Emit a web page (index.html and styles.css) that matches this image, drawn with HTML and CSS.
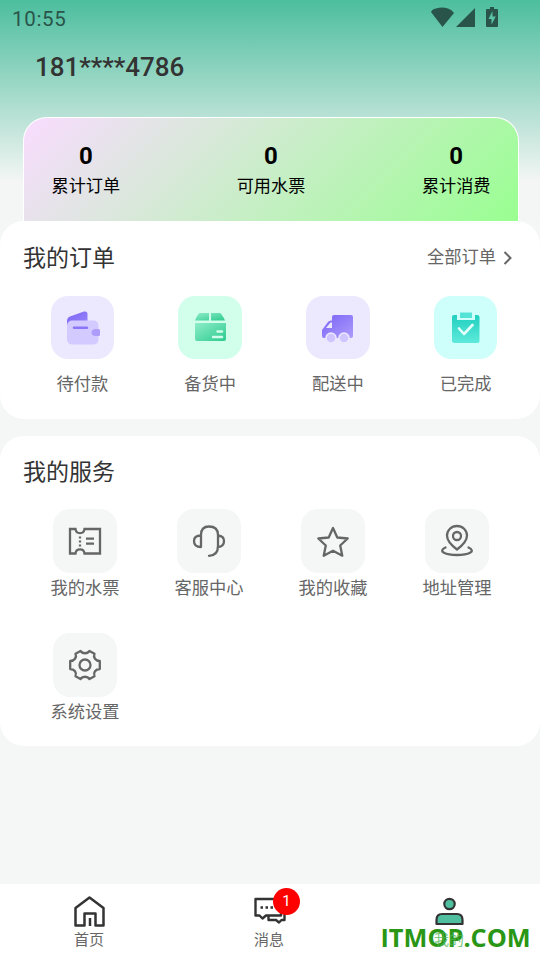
FILE: index.html
```html
<!DOCTYPE html>
<html lang="zh-CN">
<head>
<meta charset="utf-8">
<title>我的</title>
<link rel="stylesheet" href="styles.css">
</head>
<body>
<div class="app">
  <header class="header">
    <div class="status">
      <span class="clock">10:55</span>
      <svg class="status-icons" width="70" height="28" viewBox="0 0 70 28" fill="#29544a">
        <path d="M1 12Q2 9 6 8.500Q12 6.500 18 8.500Q22 9.500 24 13L12.500 27Z"/>
        <path d="M26 27H45V8Z"/>
        <path fill-rule="evenodd" d="M60 7H64V9H67Q68 9 68 10V26Q68 27 67 27H57Q56 27 56 26V10Q56 9 57 9H60ZM62.500 11L58.500 19H61.500V24.500L65.800 16.500H62.500Z"/>
      </svg>
    </div>
    <h1 class="phone">181****4786</h1>
    <section class="stats">
      <div class="stat"><b>0</b><span>累计订单</span></div>
      <div class="stat"><b>0</b><span>可用水票</span></div>
      <div class="stat"><b>0</b><span>累计消费</span></div>
    </section>
  </header>

  <section class="panel orders">
    <div class="panel-head">
      <h2>我的订单</h2>
      <a class="more"><span>全部订单</span>
        <svg width="10" height="16" viewBox="0 0 10 16" fill="none" stroke="#666" stroke-width="2"><path d="M1.500 2L7.500 8L1.500 14"/></svg>
      </a>
    </div>
    <div class="order-grid">
      <div class="item">
        <div class="tile violet"><svg viewBox="0 0 64 64">
          <defs><linearGradient id="wallet" x1="0" y1="0" x2="1" y2="1"><stop offset="0" stop-color="#7b65f5"/><stop offset="1" stop-color="#9b87fb"/></linearGradient></defs>
          <path d="M16 31V25Q16 21.500 19 20.500L33 15.500Q36.500 15 36.500 18V27H19Z" fill="url(#wallet)"/>
          <path d="M21 24.500H42Q47.500 24.500 47.500 30V43Q47.500 48.500 42 48.500H22Q16 48.500 16 43V29Q17 24.500 21 24.500Z" fill="#d3caff"/>
          <path d="M23 31.700H36" stroke="#8c75f7" stroke-width="2.400" stroke-linecap="round"/>
          <path d="M44 33H47.500Q49 33 49 34.500V38.500Q49 40 47.500 40H44Q40.500 39.500 40.500 36.500Q40.500 33.500 44 33Z" fill="#ae9cfb"/>
        </svg></div><span>待付款</span>
      </div>
      <div class="item">
        <div class="tile mint"><svg viewBox="0 0 64 64">
          <defs><linearGradient id="box" x1="0" y1="0" x2="1" y2="1"><stop offset="0" stop-color="#8eedc9"/><stop offset="1" stop-color="#2dcb8e"/></linearGradient></defs>
          <path d="M21.500 17H31V24.500H17Q19 19 21.500 17ZM33 17H42Q44 18 47 24.500H33Z" fill="url(#box)"/>
          <path d="M17 27H48V43Q48 45 46 45H19Q17 45 17 43Z" fill="url(#box)"/>
          <path d="M39.500 35.500H44M35 41H44" stroke="#d1ffeb" stroke-width="2.500" stroke-linecap="round"/>
        </svg></div><span>备货中</span>
      </div>
      <div class="item">
        <div class="tile violet"><svg viewBox="0 0 64 64">
          <defs><linearGradient id="truck" x1="0" y1="0" x2="1" y2="1"><stop offset="0" stop-color="#7962f5"/><stop offset="1" stop-color="#ad9cfc"/></linearGradient></defs>
          <path fill-rule="evenodd" d="M28 19H45Q47 19 47 21V40Q47 42 45 42H18Q16 42 16 40V34L22 26Q23 24.500 25 24.500H26V21Q26 19 28 19ZM24.500 26.500L20 32H26V26.500Z" fill="url(#truck)"/>
          <g fill="#d0c5ff" stroke="#ece9ff" stroke-width="1.500"><circle cx="25" cy="42" r="5"/><circle cx="38" cy="42" r="5"/></g>
        </svg></div><span>配送中</span>
      </div>
      <div class="item">
        <div class="tile cyan"><svg viewBox="0 0 64 64">
          <defs><linearGradient id="clip" x1="0" y1="0" x2="0" y2="1"><stop offset="0" stop-color="#20cfbf"/><stop offset="1" stop-color="#5eeadb"/></linearGradient></defs>
          <path d="M20 19H23V24H41V19H43Q45.500 19 45.500 21V45Q45.500 47 43.500 47H20.500Q18 47 18 45V21Q18 19 20 19Z" fill="url(#clip)"/>
          <path d="M26 16.500H38V22H26Z" fill="#55e3d5"/>
          <path d="M25 32.500L30 38L38.500 29" fill="none" stroke="#e3fffc" stroke-width="2.600" stroke-linecap="round" stroke-linejoin="round"/>
        </svg></div><span>已完成</span>
      </div>
    </div>
  </section>

  <section class="panel services">
    <div class="panel-head"><h2>我的服务</h2></div>
    <div class="service-grid">
      <div class="item">
        <div class="tile gray"><svg class="line" viewBox="0 0 64 64">
          <path d="M17 20H22.500C23 25.500 31 25.500 31.500 20H47V44.500H31.500C31 39 23 39 22.500 44.500H17Z"/>
          <path d="M27 27.500V29.500M27 31.500V33.500M27 35.500V37.500M33 29.700H41M33 34.700H41"/>
        </svg></div><span>我的水票</span>
      </div>
      <div class="item">
        <div class="tile gray"><svg class="line" viewBox="0 0 64 64">
          <path d="M24 38V26Q24 17.500 32 17.500Q41 17.500 41 26V37Q41 46.500 32 46.800M24 26.500Q17 26.500 17 32Q17 38 24 38M41 26.500Q47 27 47 32Q47 37.500 41 38" stroke-linecap="round"/>
        </svg></div><span>客服中心</span>
      </div>
      <div class="item">
        <div class="tile gray"><svg class="line" viewBox="0 0 64 64">
          <path d="M32 19L36.300 28.500L46.700 29.500L39.200 36.500L41.300 46.700L32 41.700L22.700 46.700L24.800 36.500L17.300 29.500L27.700 28.500Z" stroke-linejoin="round"/>
        </svg></div><span>我的收藏</span>
      </div>
      <div class="item">
        <div class="tile gray"><svg class="line" viewBox="0 0 64 64" stroke-linecap="round">
          <path d="M32 40.500Q22 33 22 26.500A10 9.500 0 0 1 42 26.500Q42 33 32 40.500Z" stroke-linejoin="round"/>
          <circle cx="32" cy="27" r="4"/>
          <path d="M20.500 38.500C12 42.500 21 46 32 46S52 42.500 43.500 38.500"/>
        </svg></div><span>地址管理</span>
      </div>
      <div class="item">
        <div class="tile gray"><svg class="line" viewBox="0 0 64 64">
          <path d="M27.500 18C29.500 21 34.500 21 36.500 18L41.500 20.700C40 24.500 42.500 28 46.800 28V36C42.500 36 40 39.500 41.500 43.300L36.500 46C34.500 43 29.500 43 27.500 46L22.500 43.300C24 39.500 21.500 36 17.200 36V28C21.500 28 24 24.500 22.500 20.700Z" stroke-linejoin="round"/>
          <circle cx="32" cy="32" r="5.500"/>
        </svg></div><span>系统设置</span>
      </div>
    </div>
  </section>

  <nav class="tabbar">
    <div class="tab">
      <svg width="36" height="36" viewBox="0 0 36 36" fill="none" stroke="#333" stroke-width="2.500" stroke-linejoin="round">
        <path d="M4.500 15L18.500 4.500L32.500 15V32.500H24.500V20.500H13.500V32.500H4.500Z"/><path d="M19 25V33"/>
      </svg><span>首页</span>
    </div>
    <div class="tab">
      <svg width="36" height="36" viewBox="0 0 36 36" fill="none" stroke="#333" stroke-width="2.400" stroke-linejoin="round">
        <path d="M4.500 6H30V22.500H15L11.500 25.500L8.500 22.500H4.500Z"/><path d="M17.500 22.500V27H25L28 29.500L30.500 27H33.500V17H30"/><path d="M9.500 14.500H12M14.500 14.500H17M19.500 14.500H22"/>
      </svg><i class="badge">1</i><span>消息</span>
    </div>
    <div class="tab active">
      <svg width="36" height="36" viewBox="0 0 36 36" fill="#4fbf9f" stroke="#333" stroke-width="2.200" stroke-linejoin="round">
        <circle cx="18.500" cy="11" r="5.200"/><path d="M5.500 31V27Q5.500 21 11 21H26Q31.500 21 31.500 27V31Z"/>
      </svg>
      <strong class="watermark">ITMOP.COM</strong>
      <span class="label">我的</span>
    </div>
  </nav>
</div>
</body>
</html>
```
FILE: styles.css
```css
* { box-sizing: border-box; }
body { margin: 0; background: #f4f7f6; font-family: Roboto, "Noto Sans CJK SC", sans-serif; color: #333; }
h1, h2 { margin: 0; font-weight: 400; }
svg { display: block; }
.app { height: 960px; overflow: hidden; display: flex; flex-direction: column; }
.header { height: 221px; flex: none; display: flex; flex-direction: column; background: linear-gradient(#4cbe9e 0, #a9dccd 100px, #f4f6f5 182px); }
.status { height: 36px; display: flex; justify-content: space-between; padding: 0 40px 0 12px; }
.clock { font-size: 20.5px; line-height: 38px; letter-spacing: .7px; color: #29544a; }
.phone { height: 81px; padding-left: 35px; font-size: 26px; line-height: 62px; font-weight: 500; letter-spacing: -.03px; }
.stats { height: 104px; margin: 0 21px 0 23px; padding: 24px 27.5px 0; display: flex; justify-content: space-between; border: 1px solid #fff; border-bottom: 0; border-radius: 24px 24px 0 0; background: linear-gradient(135deg, #f9dcff, #99ff91); color: #000; }
.stat { display: flex; flex-direction: column; align-items: center; }
.stat b { font-size: 24px; line-height: 28px; }
.stat span { font-size: 17.15px; line-height: 32px; }
.panel { background: #fff; border-radius: 24px; flex: none; }
.orders { height: 198px; }
.services { height: 310px; margin-top: 17px; }
.panel-head { height: 73px; padding: 0 27px 0 23px; display: flex; align-items: center; justify-content: space-between; }
.panel-head h2 { font-size: 23px; line-height: 34px; }
.orders h2 { padding-top: 2px; }
.more { display: flex; align-items: center; gap: 7px; font-size: 17.25px; color: #666; }
.more span { padding-bottom: 4px; }
.order-grid { display: grid; grid-template-columns: repeat(4, 1fr); padding: 2px 10.5px 0 18.5px; }
.service-grid { display: grid; grid-template-columns: repeat(4, 1fr); grid-auto-rows: 124px; padding: 0 21px 0 23px; }
.item { display: flex; flex-direction: column; align-items: center; font-size: 17.25px; color: #666; }
.item span { line-height: 30px; }
.order-grid .item span { margin-top: 10px; }
.tile { width: 64px; height: 64px; border-radius: 17px; }
.order-grid .tile { width: 63.4px; height: 63px; }
.violet { background: #ece9ff; }
.mint { background: #d1ffeb; }
.cyan { background: #cffffb; }
.gray { background: #f4f7f6; }
.tile svg { width: 64px; height: 64px; }
.line { fill: none; stroke: #666; stroke-width: 2.3; }
.tabbar { margin-top: auto; height: 76px; flex: none; display: flex; background: #fff; }
.tab { position: relative; width: 180px; padding: 9px 2px 0 0; display: flex; flex-direction: column; align-items: center; font-size: 15px; color: #666; }
.tab span { line-height: 22px; }
.tab .label { position: relative; color: #4db552; opacity: .75; }
.badge { position: absolute; left: 93px; top: 4px; width: 27px; height: 27px; border-radius: 50%; background: #f00; color: #fff; font-size: 15px; font-style: normal; line-height: 26px; text-align: center; }
.watermark { position: absolute; left: 20.5px; top: 36px; font: 700 25.3px/34px "Open Sans", sans-serif; color: #2a9616; }
```
